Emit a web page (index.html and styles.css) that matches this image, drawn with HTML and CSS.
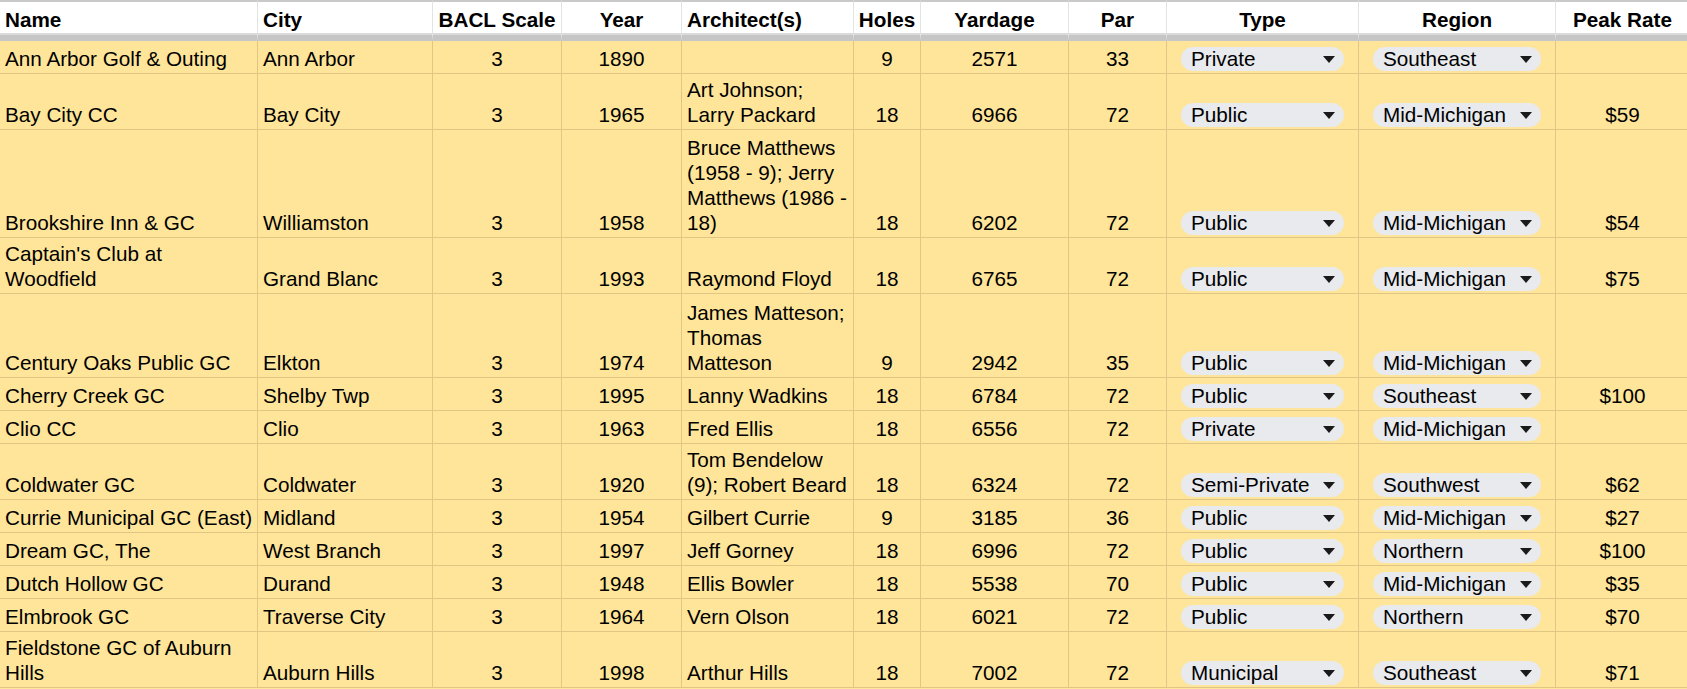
FILE: index.html
```html
<!DOCTYPE html>
<html>
<head>
<meta charset="utf-8">
<link rel="stylesheet" href="styles.css">
</head>
<body>
<div class="sheet">
  <div class="row head">
    <div class="cell">Name</div>
    <div class="cell">City</div>
    <div class="cell c">BACL Scale</div>
    <div class="cell c">Year</div>
    <div class="cell">Architect(s)</div>
    <div class="cell c">Holes</div>
    <div class="cell c">Yardage</div>
    <div class="cell c">Par</div>
    <div class="cell c">Type</div>
    <div class="cell c">Region</div>
    <div class="cell c">Peak Rate</div>
  </div>

  <div class="row">
    <div class="cell">Ann Arbor Golf &amp; Outing</div>
    <div class="cell">Ann Arbor</div>
    <div class="cell c">3</div>
    <div class="cell c">1890</div>
    <div class="cell"></div>
    <div class="cell c">9</div>
    <div class="cell c">2571</div>
    <div class="cell c">33</div>
    <div class="cell chipcell"><span class="chip"><span>Private</span><i class="arrow"></i></span></div>
    <div class="cell chipcell"><span class="chip"><span>Southeast</span><i class="arrow"></i></span></div>
    <div class="cell c"></div>
  </div>

  <div class="row l2">
    <div class="cell">Bay City CC</div>
    <div class="cell">Bay City</div>
    <div class="cell c">3</div>
    <div class="cell c">1965</div>
    <div class="cell"><span class="txt">Art Johnson;<br>Larry Packard</span></div>
    <div class="cell c">18</div>
    <div class="cell c">6966</div>
    <div class="cell c">72</div>
    <div class="cell chipcell"><span class="chip"><span>Public</span><i class="arrow"></i></span></div>
    <div class="cell chipcell"><span class="chip"><span>Mid-Michigan</span><i class="arrow"></i></span></div>
    <div class="cell c">$59</div>
  </div>

  <div class="row l4">
    <div class="cell">Brookshire Inn &amp; GC</div>
    <div class="cell">Williamston</div>
    <div class="cell c">3</div>
    <div class="cell c">1958</div>
    <div class="cell"><span class="txt">Bruce Matthews<br>(1958 - 9); Jerry<br>Matthews (1986 -<br>18)</span></div>
    <div class="cell c">18</div>
    <div class="cell c">6202</div>
    <div class="cell c">72</div>
    <div class="cell chipcell"><span class="chip"><span>Public</span><i class="arrow"></i></span></div>
    <div class="cell chipcell"><span class="chip"><span>Mid-Michigan</span><i class="arrow"></i></span></div>
    <div class="cell c">$54</div>
  </div>

  <div class="row l2">
    <div class="cell"><span class="txt">Captain's Club at<br>Woodfield</span></div>
    <div class="cell">Grand Blanc</div>
    <div class="cell c">3</div>
    <div class="cell c">1993</div>
    <div class="cell">Raymond Floyd</div>
    <div class="cell c">18</div>
    <div class="cell c">6765</div>
    <div class="cell c">72</div>
    <div class="cell chipcell"><span class="chip"><span>Public</span><i class="arrow"></i></span></div>
    <div class="cell chipcell"><span class="chip"><span>Mid-Michigan</span><i class="arrow"></i></span></div>
    <div class="cell c">$75</div>
  </div>

  <div class="row l3">
    <div class="cell">Century Oaks Public GC</div>
    <div class="cell">Elkton</div>
    <div class="cell c">3</div>
    <div class="cell c">1974</div>
    <div class="cell"><span class="txt">James Matteson;<br>Thomas<br>Matteson</span></div>
    <div class="cell c">9</div>
    <div class="cell c">2942</div>
    <div class="cell c">35</div>
    <div class="cell chipcell"><span class="chip"><span>Public</span><i class="arrow"></i></span></div>
    <div class="cell chipcell"><span class="chip"><span>Mid-Michigan</span><i class="arrow"></i></span></div>
    <div class="cell c"></div>
  </div>

  <div class="row">
    <div class="cell">Cherry Creek GC</div>
    <div class="cell">Shelby Twp</div>
    <div class="cell c">3</div>
    <div class="cell c">1995</div>
    <div class="cell">Lanny Wadkins</div>
    <div class="cell c">18</div>
    <div class="cell c">6784</div>
    <div class="cell c">72</div>
    <div class="cell chipcell"><span class="chip"><span>Public</span><i class="arrow"></i></span></div>
    <div class="cell chipcell"><span class="chip"><span>Southeast</span><i class="arrow"></i></span></div>
    <div class="cell c">$100</div>
  </div>

  <div class="row">
    <div class="cell">Clio CC</div>
    <div class="cell">Clio</div>
    <div class="cell c">3</div>
    <div class="cell c">1963</div>
    <div class="cell">Fred Ellis</div>
    <div class="cell c">18</div>
    <div class="cell c">6556</div>
    <div class="cell c">72</div>
    <div class="cell chipcell"><span class="chip"><span>Private</span><i class="arrow"></i></span></div>
    <div class="cell chipcell"><span class="chip"><span>Mid-Michigan</span><i class="arrow"></i></span></div>
    <div class="cell c"></div>
  </div>

  <div class="row l2">
    <div class="cell">Coldwater GC</div>
    <div class="cell">Coldwater</div>
    <div class="cell c">3</div>
    <div class="cell c">1920</div>
    <div class="cell"><span class="txt">Tom Bendelow<br>(9); Robert Beard</span></div>
    <div class="cell c">18</div>
    <div class="cell c">6324</div>
    <div class="cell c">72</div>
    <div class="cell chipcell"><span class="chip"><span>Semi-Private</span><i class="arrow"></i></span></div>
    <div class="cell chipcell"><span class="chip"><span>Southwest</span><i class="arrow"></i></span></div>
    <div class="cell c">$62</div>
  </div>

  <div class="row">
    <div class="cell">Currie Municipal GC (East)</div>
    <div class="cell">Midland</div>
    <div class="cell c">3</div>
    <div class="cell c">1954</div>
    <div class="cell">Gilbert Currie</div>
    <div class="cell c">9</div>
    <div class="cell c">3185</div>
    <div class="cell c">36</div>
    <div class="cell chipcell"><span class="chip"><span>Public</span><i class="arrow"></i></span></div>
    <div class="cell chipcell"><span class="chip"><span>Mid-Michigan</span><i class="arrow"></i></span></div>
    <div class="cell c">$27</div>
  </div>

  <div class="row">
    <div class="cell">Dream GC, The</div>
    <div class="cell">West Branch</div>
    <div class="cell c">3</div>
    <div class="cell c">1997</div>
    <div class="cell">Jeff Gorney</div>
    <div class="cell c">18</div>
    <div class="cell c">6996</div>
    <div class="cell c">72</div>
    <div class="cell chipcell"><span class="chip"><span>Public</span><i class="arrow"></i></span></div>
    <div class="cell chipcell"><span class="chip"><span>Northern</span><i class="arrow"></i></span></div>
    <div class="cell c">$100</div>
  </div>

  <div class="row">
    <div class="cell">Dutch Hollow GC</div>
    <div class="cell">Durand</div>
    <div class="cell c">3</div>
    <div class="cell c">1948</div>
    <div class="cell">Ellis Bowler</div>
    <div class="cell c">18</div>
    <div class="cell c">5538</div>
    <div class="cell c">70</div>
    <div class="cell chipcell"><span class="chip"><span>Public</span><i class="arrow"></i></span></div>
    <div class="cell chipcell"><span class="chip"><span>Mid-Michigan</span><i class="arrow"></i></span></div>
    <div class="cell c">$35</div>
  </div>

  <div class="row">
    <div class="cell">Elmbrook GC</div>
    <div class="cell">Traverse City</div>
    <div class="cell c">3</div>
    <div class="cell c">1964</div>
    <div class="cell">Vern Olson</div>
    <div class="cell c">18</div>
    <div class="cell c">6021</div>
    <div class="cell c">72</div>
    <div class="cell chipcell"><span class="chip"><span>Public</span><i class="arrow"></i></span></div>
    <div class="cell chipcell"><span class="chip"><span>Northern</span><i class="arrow"></i></span></div>
    <div class="cell c">$70</div>
  </div>

  <div class="row l2">
    <div class="cell"><span class="txt">Fieldstone GC of Auburn<br>Hills</span></div>
    <div class="cell">Auburn Hills</div>
    <div class="cell c">3</div>
    <div class="cell c">1998</div>
    <div class="cell">Arthur Hills</div>
    <div class="cell c">18</div>
    <div class="cell c">7002</div>
    <div class="cell c">72</div>
    <div class="cell chipcell"><span class="chip"><span>Municipal</span><i class="arrow"></i></span></div>
    <div class="cell chipcell"><span class="chip"><span>Southeast</span><i class="arrow"></i></span></div>
    <div class="cell c">$71</div>
  </div>
</div>
</body>
</html>
```

FILE: styles.css
```css
html, body {
  margin: 0;
  padding: 0;
  background: #ffe599;
}
body {
  width: 1687px;
  height: 689px;
  overflow: hidden;
  font-family: "Liberation Sans", Arial, sans-serif;
  font-size: 20.7px;
  color: #000;
}
.sheet {
  width: 1690px;
}
.row {
  display: grid;
  grid-template-columns: 258px 175px 129px 120px 172px 67px 148px 98px 192px 197px 134px;
  height: 33px;
  background: #ffe599;
}
.row.l2 { height: 56px; }
.row.l3 { height: 84px; }
.row.l4 { height: 108px; }

.cell {
  box-sizing: border-box;
  border-right: 1px solid #e1c585;
  border-bottom: 1px solid #e1c585;
  padding: 0 5px 2px 5px;
  display: flex;
  align-items: flex-end;
  line-height: 25px;
  white-space: nowrap;
  overflow: hidden;
}
.cell.c {
  justify-content: center;
}
.txt {
  display: block;
}

.row.head {
  height: 41px;
  background: #fff;
}
.row.head .cell {
  background: #fff;
  font-weight: bold;
  border-top: 2px solid #c9c9c9;
  border-bottom: 6px solid #c6c6c6;
  border-right: 1px solid #e2e3e3;
  box-shadow: inset 0 -2px 0 #dadada;
  padding-bottom: 3px;
}

.chipcell {
  padding: 0 14px 2px 14px;
}
.chip {
  flex: 1;
  height: 24px;
  border-radius: 12px;
  background: #e8eaed;
  display: flex;
  align-items: center;
  justify-content: space-between;
  padding: 0 9px 0 10px;
  line-height: 24px;
  box-sizing: border-box;
}
.arrow {
  display: block;
  width: 0;
  height: 0;
  border-left: 6.5px solid transparent;
  border-right: 6.5px solid transparent;
  border-top: 7px solid #1a1a1a;
}
```
